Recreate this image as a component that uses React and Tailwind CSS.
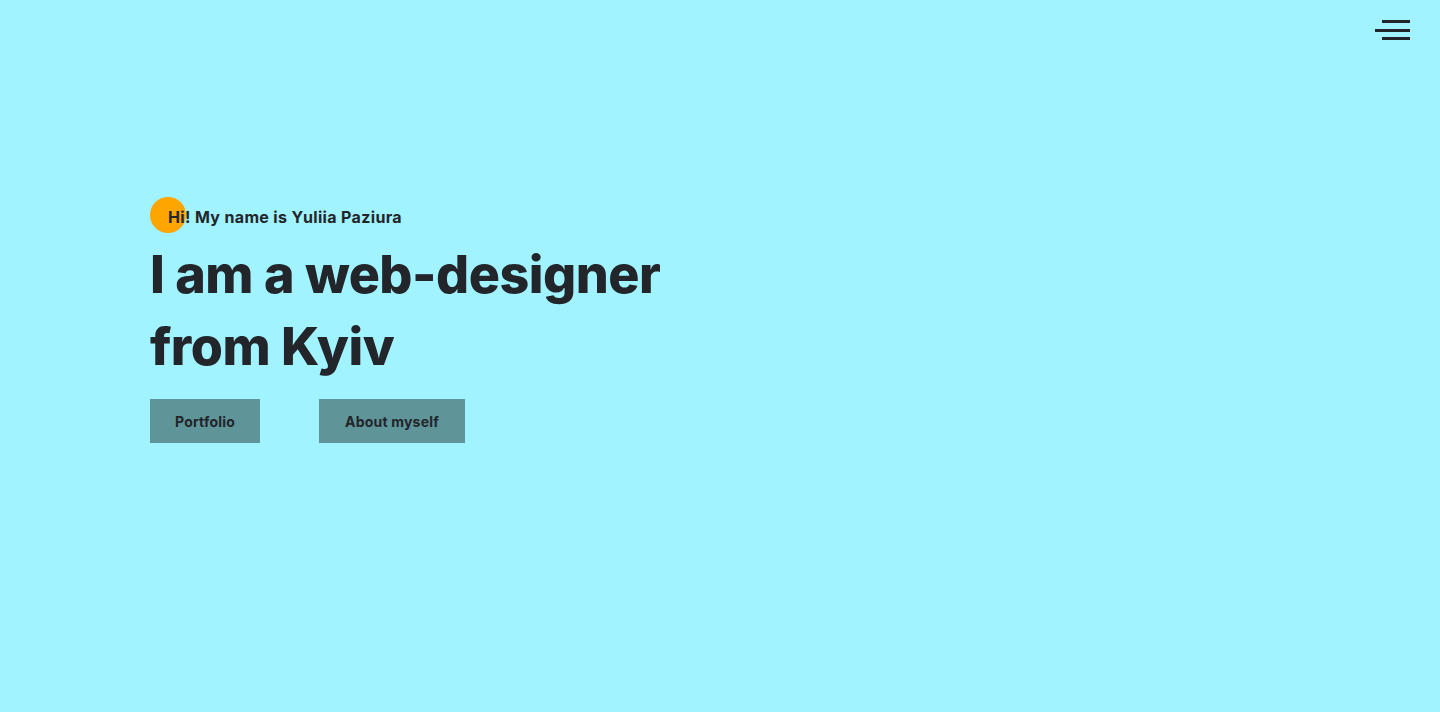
import React from "react";

export default function App() {
  return (
    <div className="relative h-[712px] w-full overflow-hidden bg-[#a1f3ff] text-[#22252a]" style={{ fontFamily: "Inter, 'Open Sans', sans-serif" }}>
      <button className="absolute right-[30px] top-[20px] flex h-[20px] w-[35px] flex-col items-end justify-between">
        <span className="block h-[3px] w-[28px] bg-[#22252a]" />
        <span className="block h-[3px] w-[35px] bg-[#22252a]" />
        <span className="block h-[3px] w-[28px] bg-[#22252a]" />
      </button>
      <div className="flex flex-col pl-[150px] pt-[197px]">
        <div className="relative h-[36px]">
          <span className="absolute left-0 top-0 h-[36px] w-[36px] rounded-full bg-[#ffa500]" />
          <p className="relative pl-[18px] pt-[10px] text-[16px] font-bold leading-[20px] tracking-[0.35px]">Hi! My name is Yuliia Paziura</p>
        </div>
        <h1 className="mt-[6px] text-[52px] font-extrabold leading-[72px] tracking-[-0.5px]">
          I am a web-designer
          <br />
          from Kyiv
        </h1>
        <div className="mt-[16px] flex gap-[59px]">
          <button className="h-[44px] w-[110px] bg-[#5f9499] text-[14px] font-bold tracking-[0.2px]">Portfolio</button>
          <button className="h-[44px] w-[146px] bg-[#5f9499] text-[14px] font-bold tracking-[0.2px]">About myself</button>
        </div>
      </div>
    </div>
  );
}
